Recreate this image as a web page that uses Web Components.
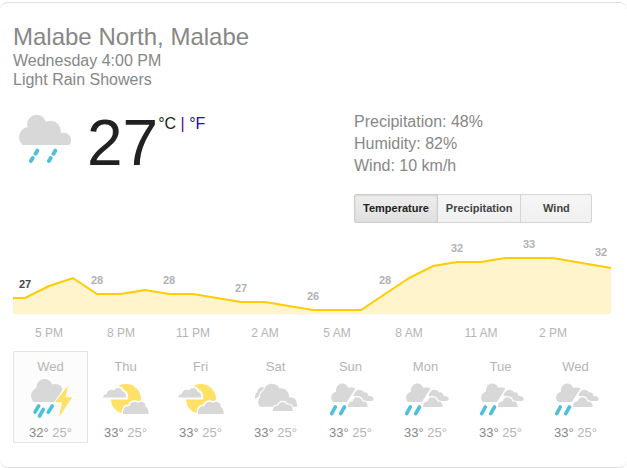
<!DOCTYPE html>
<html lang="en">
<head>
<meta charset="utf-8">
<meta name="viewport" content="width=device-width, initial-scale=1">
<title>Weather – Malabe North, Malabe</title>
<style>
  body { margin: 0; background: #fff; font-family: "Liberation Sans", Arial, sans-serif; color: #878787; }
</style>
</head>
<body>
<weather-card></weather-card>

<script>
const icons = {
  rain: `
    <clipPath id="c"><rect width="64" height="38"/></clipPath>
    <g fill="#d8d8d8" clip-path="url(#c)">
      <circle cx="23.7" cy="17.5" r="9.7"/><circle cx="37.6" cy="24" r="10.2"/>
      <circle cx="16" cy="30" r="10"/><circle cx="51" cy="33" r="7.2"/>
      <path d="M16 20H34L51 27V38H10V28Z"/>
    </g>
    <path stroke="#4dc0dc" stroke-width="4" stroke-linecap="round" d="M24.3 43.7L22.5 46.7M19.7 51L17.9 54M42.3 43.7L40.5 46.7M37.7 51L35.9 54"/>`,
  storm: `
    <clipPath id="c"><path d="M0 0H40V10L28.300 28H0Z"/></clipPath>
    <g fill="#d8d8d8" clip-path="url(#c)">
      <circle cx="18.600" cy="13.200" r="8.200"/><circle cx="13.300" cy="21.800" r="8.300"/>
      <circle cx="29.300" cy="18" r="8"/><path d="M8 28V20H16L26 14H34V28Z"/>
    </g>
    <path fill="#ffe168" stroke="var(--cell-bg,#fff)" stroke-width="2" paint-order="stroke" d="M42 11.5L29 28.3H36L33 43L46.3 23.3H39.500Z"/>
    <path stroke="#4dc0dc" stroke-width="3.6" stroke-linecap="round" d="M12.700 32L9 38M17.3 35.500L13.500 42M26.200 32L22.300 38.200"/>`,
  partly: `
    <circle cx="25" cy="25" r="15" fill="#ffe168"/>
    <path fill="#d8d8d8" stroke="#fff" stroke-width="4" paint-order="stroke" d="M2.300 23.400C2.300 20.800 4 20 5.800 20C6 16.500 10 14.500 13 16.400C15.500 12.700 20.500 13.700 21.500 17.500C24 18 25.300 20.500 25.200 23.400Z"/>
    <path fill="#d8d8d8" stroke="#fff" stroke-width="3" paint-order="stroke" d="M22 40C21.500 34.500 24.500 31.500 28.300 32C29.500 27.500 34.500 26.800 37 29C41 26 45 28.800 44.600 33C47 34 47.900 37 47.600 40Z"/>`,
  cloudy: `
    <path fill="#d8d8d8" d="M4 25C3.700 21.500 4.500 19 6.300 18.300C6.500 14 10 12 13.500 13.500L10 21Z"/>
    <path fill="#d8d8d8" stroke="#fff" stroke-width="2" paint-order="stroke" d="M9 32.700C6 29 7 25 9.200 23.200C8.700 19.800 10.500 17.600 13 16.600C14 8 26 7.500 28.500 14.500C34 13.500 38.500 18 38 23.500C43 22.500 46.500 26 46 32.700Z"/>
    <path fill="#d8d8d8" stroke="#fff" stroke-width="2.400" paint-order="stroke" d="M21.700 37C21.600 33.500 24 31.500 27 31.800C28.500 27 34 26.800 35.700 30.500C39 30 41.900 32 41.800 37Z"/>`,
  showers: `
    <path fill="#d8d8d8" d="M7 28C4 24.500 4.500 19.500 10 17.500C9.500 7.500 20.500 7.500 22.200 13.800C25 13 28.500 13.500 29.500 14.500L20.800 28Z"/>
    <path fill="#d8d8d8" d="M27.500 21.500C29 15 35.500 14 38 18.500C40 17.800 42.500 19.500 42.500 22C45.500 21.500 48 23 47.700 25C47.500 26.500 46.500 27 45 27H36Z"/>
    <path fill="#d8d8d8" stroke="#fff" stroke-width="2.400" paint-order="stroke" d="M22 33C22 29 24 27.300 26.500 27.500C28 21.800 35 21.800 36.500 27.500C40 27 41.700 29 41.700 33Z"/>
    <path stroke="#4dc0dc" stroke-width="3.600" stroke-linecap="round" d="M9.300 33L5.700 39.700M18.500 33L14.700 39.700"/>`
};

class WeatherIcon extends HTMLElement {
  connectedCallback() {
    const name = this.getAttribute('name');
    const box = name === 'rain' ? '0 0 64 64' : '0 1 49 47';
    const [, , w, h] = box.split(' ');
    this.attachShadow({ mode: 'open' }).innerHTML = `
      <style>:host { display: block; } svg { display: block; }</style>
      <svg width="${w}" height="${h}" viewBox="${box}" role="img" aria-label="${name}">${icons[name]}</svg>`;
  }
}
customElements.define('weather-icon', WeatherIcon);

class WeatherHeading extends HTMLElement {
  constructor() {
    super();
    this.attachShadow({ mode: 'open' }).innerHTML = `
      <style>
        :host { display: block; font-size: 16px; line-height: 19px; }
        h1 { margin: 0; font-size: 24px; line-height: 28px; font-weight: 400; }
      </style>
      <h1><slot name="place"></slot></h1>
      <div><slot name="time"></slot></div>
      <div><slot name="condition"></slot></div>`;
  }
}
customElements.define('weather-heading', WeatherHeading);

class WeatherNow extends HTMLElement {
  constructor() {
    super();
    this.attachShadow({ mode: 'open' }).innerHTML = `
      <style>
        :host { display: flex; align-items: flex-start; }
        .temp { margin: 4px 0 0 10px; font-size: 64px; line-height: 64px; color: #212121; }
        .units { margin-top: 7px; font-size: 16px; line-height: 19px; color: #609; white-space: nowrap; }
        .units span { color: #222; }
        a { color: #1a0dab; text-decoration: none; }
      </style>
      <weather-icon name="rain"></weather-icon>
      <div class="temp"><slot></slot></div>
      <div class="units"><span>°C</span> | <a href="#fahrenheit">°F</a></div>`;
  }
}
customElements.define('weather-now', WeatherNow);

class SegmentedTabs extends HTMLElement {
  connectedCallback() {
    const items = this.getAttribute('items').split(',');
    this.attachShadow({ mode: 'open' }).innerHTML = `
      <style>
        :host { display: flex; }
        button {
          box-sizing: border-box; height: 29px; min-width: 72px; margin: 0 0 0 -1px; padding: 0 8px;
          border: 1px solid #d4d4d4; background: linear-gradient(#f5f5f5, #f1f1f1);
          font: bold 11px/27px "Liberation Sans", Arial, sans-serif; color: #444;
        }
        button:first-of-type { margin-left: 0; border-radius: 2px 0 0 2px; }
        button:last-of-type { border-radius: 0 2px 2px 0; }
        button[aria-pressed="true"] {
          position: relative; border-color: #ccc; color: #222;
          background: linear-gradient(#eee, #e0e0e0); box-shadow: inset 0 1px 2px rgba(0,0,0,.1);
        }
      </style>
      ${items.map((t, i) => `<button type="button" aria-pressed="${i === 0}">${t}</button>`).join('')}`;
    const buttons = this.shadowRoot.querySelectorAll('button');
    buttons.forEach(b => b.addEventListener('click', () =>
      buttons.forEach(o => o.setAttribute('aria-pressed', o === b))));
  }
}
customElements.define('segmented-tabs', SegmentedTabs);

class WeatherDetails extends HTMLElement {
  constructor() {
    super();
    this.attachShadow({ mode: 'open' }).innerHTML = `
      <style>
        :host { display: block; padding-top: 4px; font-size: 16px; line-height: 22px; }
        segmented-tabs { margin-top: 17px; }
      </style>
      <slot></slot>
      <segmented-tabs items="Temperature,Precipitation,Wind"></segmented-tabs>`;
  }
}
customElements.define('weather-details', WeatherDetails);

class TemperatureChart extends HTMLElement {
  connectedCallback() {
    const line = '0,68 12,68 36,56 60,48 84,64 108,64 132,60 156,64 180,64 204,68 228,72 252,72 300,80 348,80 372,64 396,48 420,36 444,32 468,32 492,28 540,28 598,38';
    const labels = [[12,58,27],[84,54,28],[156,54,28],[228,62,27],[300,70,26],[372,54,28],[444,22,32],[516,18,33],[588,26,32]];
    const hours = ['5 PM','8 PM','11 PM','2 AM','5 AM','8 AM','11 AM','2 PM'];
    this.attachShadow({ mode: 'open' }).innerHTML = `
      <style>
        :host { display: block; }
        svg { display: block; width: 100%; }
        text { font: bold 11px "Liberation Sans", Arial, sans-serif; fill: #b2b2b2; text-anchor: middle; }
        text:first-of-type { fill: #444; }
        .hours { display: grid; grid-template-columns: repeat(8, 1fr); margin: 11px 4% 0 0;
          font-size: 12px; line-height: 16px; text-align: center; color: #b5b5b5; }
      </style>
      <svg viewBox="0 0 600 84">
        <polygon fill="#fff4cc" points="0,84 ${line} 598,84"/>
        <polyline fill="none" stroke="#fc0" stroke-width="2" points="${line}"/>
        ${labels.map(([x, y, t]) => `<text x="${x}" y="${y}">${t}</text>`).join('')}
      </svg>
      <div class="hours">${hours.map(h => `<span>${h}</span>`).join('')}</div>`;
  }
}
customElements.define('temperature-chart', TemperatureChart);

class ForecastDay extends HTMLElement {
  connectedCallback() {
    this.attachShadow({ mode: 'open' }).innerHTML = `
      <style>
        :host { display: flex; flex-direction: column; align-items: center; padding: 7px 0 1px;
          border: 1px solid transparent; font-size: 13px; line-height: 16px; color: #b5b5b5; }
        :host([selected]) { --cell-bg: #fcfcfc; background: #fcfcfc; border-color: #e4e4e4; }
        .temps { margin-top: 3px; white-space: nowrap; }
        .high { color: #878787; }
      </style>
      <div>${this.getAttribute('day')}</div>
      <weather-icon name="${this.getAttribute('icon')}"></weather-icon>
      <div class="temps"><span class="high">${this.getAttribute('high')}°</span> ${this.getAttribute('low')}°</div>`;
  }
}
customElements.define('forecast-day', ForecastDay);

class WeatherCard extends HTMLElement {
  constructor() {
    super();
    const days = [['Wed','storm',32],['Thu','partly',33],['Fri','partly',33],['Sat','cloudy',33],
      ['Sun','showers',33],['Mon','showers',33],['Tue','showers',33],['Wed','showers',33]];
    this.attachShadow({ mode: 'open' }).innerHTML = `
      <style>
        :host { display: block; margin-top: 2px; padding: 20px 14px 24px 13px;
          border: solid #dfdfdf; border-width: 1px 0; border-radius: 8px; }
        .current { display: grid; grid-template-columns: 1fr 259px; margin-top: 18px; }
        temperature-chart { margin-top: 7px; }
        .week { display: grid; grid-template-columns: repeat(8, 1fr); margin-top: 10px; }
      </style>
      <weather-heading>
        <span slot="place">Malabe North, Malabe</span>
        <span slot="time">Wednesday 4:00 PM</span>
        <span slot="condition">Light Rain Showers</span>
      </weather-heading>
      <div class="current">
        <weather-now>27</weather-now>
        <weather-details>
          <div>Precipitation: 48%</div>
          <div>Humidity: 82%</div>
          <div>Wind: 10 km/h</div>
        </weather-details>
      </div>
      <temperature-chart></temperature-chart>
      <div class="week">
        ${days.map(([d, i, h], n) => `<forecast-day ${n ? '' : 'selected'} day="${d}" icon="${i}" high="${h}" low="25"></forecast-day>`).join('')}
      </div>`;
  }
}
customElements.define('weather-card', WeatherCard);
</script>
</body>
</html>
